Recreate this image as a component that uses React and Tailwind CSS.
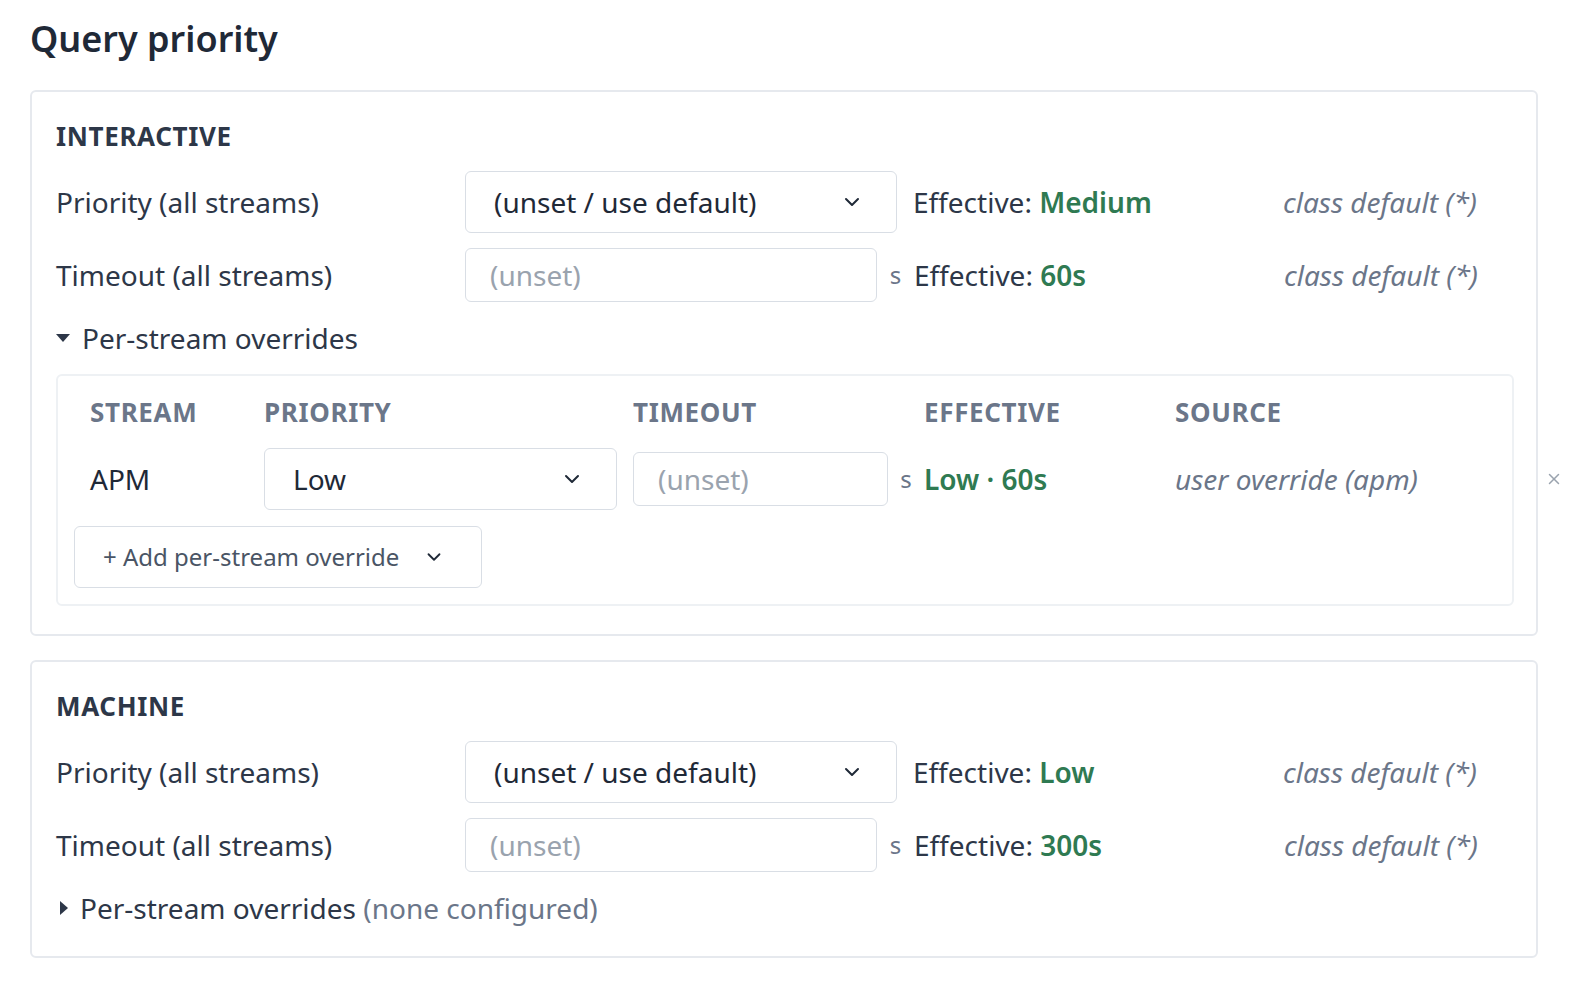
import React from "react";
import { ChevronDown, X } from "lucide-react";

const font = { fontFamily: '"Noto Sans", "Open Sans", sans-serif' };

function Select({ value, className = "" }) {
  return (
    <div className={`flex items-center justify-between border border-[#d9dee5] rounded-md bg-white pl-7 pr-8 text-[28px] text-[#1f2937] ${className}`}>
      <span>{value}</span>
      <ChevronDown size={24} strokeWidth={2} className="text-[#1f2937]" />
    </div>
  );
}

function Input({ className = "" }) {
  return (
    <div className={`flex items-center border border-[#d9dee5] rounded-md bg-white px-6 text-[28px] text-[#9aa3ae] ${className}`}>
      (unset)
    </div>
  );
}

function Row({ label, children, effective, h }) {
  return (
    <div className="flex items-center text-[28px] text-[#2d3748] shrink-0" style={{ height: h }}>
      <div className="w-[409px] shrink-0">{label}</div>
      {children}
      <div className="w-[370px] shrink-0">
        Effective: <span className="font-semibold text-[#2f7a52]">{effective}</span>
      </div>
      <div className="italic text-[#6b7689]">class default (*)</div>
    </div>
  );
}

function Section({ name, priority, timeout, children }) {
  return (
    <div className="border-2 border-[#e6e9ee] rounded-md px-6 pt-[26px] pb-7">
      <div className="text-[26px] font-bold text-[#2d3748] tracking-wide mb-[16px] leading-[36px]">{name}</div>
      <Row label="Priority (all streams)" effective={priority} h={64}>
        <Select value="(unset / use default)" className="w-[432px] h-[62px] mr-4 shrink-0" />
      </Row>
      <div className="h-[14px]" />
      <Row label="Timeout (all streams)" effective={timeout} h={54}>
        <Input className="w-[412px] h-[54px] shrink-0" />
        <span className="w-[37px] text-center text-[24px] text-[#6b7689]">s</span>
      </Row>
      {children}
    </div>
  );
}

export default function App() {
  return (
    <div style={font} className="bg-white min-h-screen px-[30px] pt-4 w-[1596px] overflow-hidden">
      <h1 className="text-[36px] font-semibold text-[#1f2937] mb-[28px] leading-[46px]">Query priority</h1>
      <div className="w-[1508px] flex flex-col gap-6">
        <Section name="INTERACTIVE" priority="Medium" timeout="60s">
          <div className="flex items-center gap-3 mt-4 mb-4 text-[28px] text-[#2d3748] leading-[40px]">
            <span className="w-0 h-0 border-l-[7px] border-r-[7px] border-t-[8px] border-l-transparent border-r-transparent border-t-[#2d3748]" />
            Per-stream overrides
          </div>
          <div className="border-2 border-[#eef1f4] rounded-md pl-4 pt-5 pb-4 w-[1458px] overflow-visible">
            <div className="flex text-[26px] font-bold text-[#6b7689] tracking-wide h-[32px] items-center">
              <div className="w-[190px] pl-4 shrink-0">STREAM</div>
              <div className="w-[369px] shrink-0">PRIORITY</div>
              <div className="w-[291px] shrink-0">TIMEOUT</div>
              <div className="w-[251px] shrink-0">EFFECTIVE</div>
              <div>SOURCE</div>
            </div>
            <div className="flex items-center h-[62px] mt-[20px] text-[28px] text-[#1f2937]">
              <div className="w-[190px] pl-4 shrink-0">APM</div>
              <Select value="Low" className="w-[353px] h-[62px] mr-4 shrink-0" />
              <Input className="w-[255px] h-[54px] shrink-0" />
              <span className="w-[36px] text-center text-[24px] text-[#6b7689] shrink-0">s</span>
              <div className="w-[251px] font-semibold text-[#2f7a52] shrink-0">Low · 60s</div>
              <div className="w-[370px] italic text-[#6b7689] shrink-0">user override (apm)</div>
              <X size={18} className="text-[#9aa3ae] shrink-0" />
            </div>
            <div className="flex items-center justify-between w-[408px] h-[62px] mt-4 border border-[#d9dee5] rounded-md pl-7 pr-9 text-[24px] text-[#4a5565]">
              <span>+ Add per-stream override</span>
              <ChevronDown size={22} className="text-[#1f2937]" />
            </div>
          </div>
        </Section>
        <Section name="MACHINE" priority="Low" timeout="300s">
          <div className="flex items-center gap-3 mt-4 text-[28px] text-[#2d3748] leading-[40px]">
            <span className="ml-1 w-0 h-0 border-t-[7px] border-b-[7px] border-l-[8px] border-t-transparent border-b-transparent border-l-[#2d3748]" />
            <span>Per-stream overrides <span className="text-[#6b7689]">(none configured)</span></span>
          </div>
        </Section>
      </div>
    </div>
  );
}
